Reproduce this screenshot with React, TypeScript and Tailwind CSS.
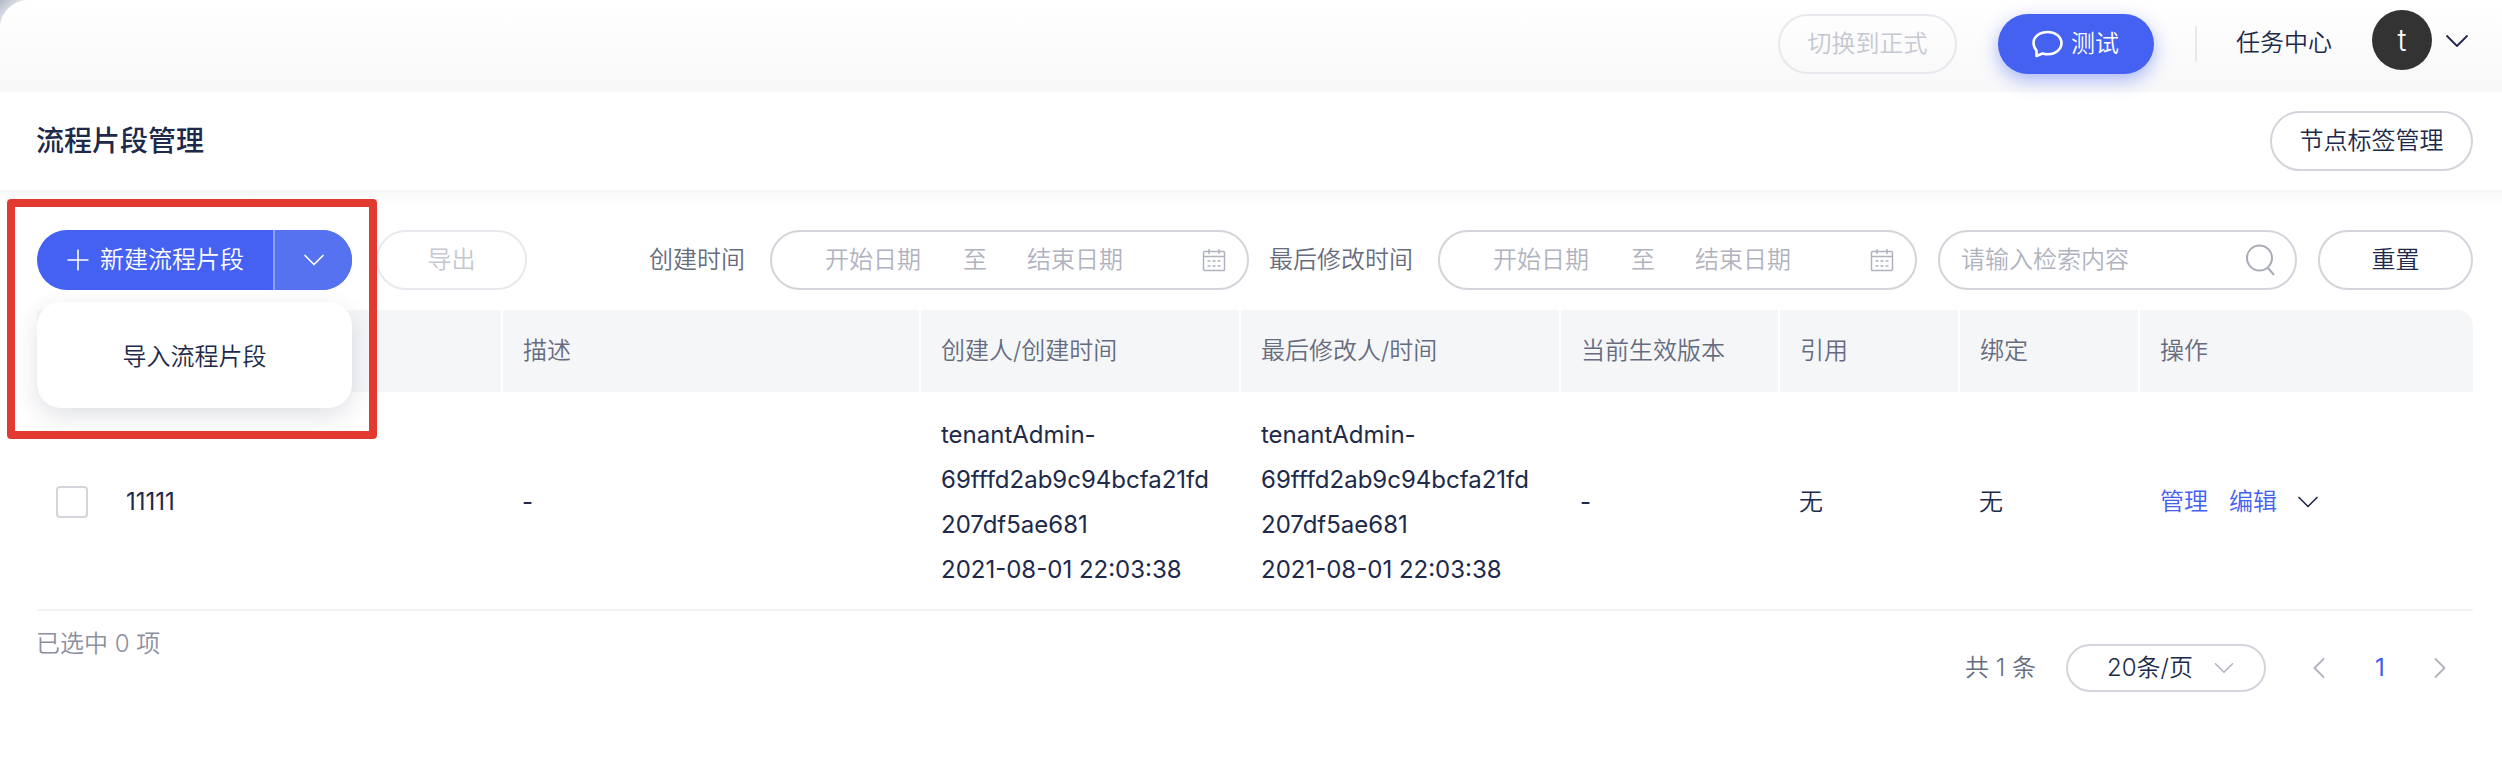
import { ChevronDown, ChevronLeft, ChevronRight, Plus } from "lucide-react"

const pill = "flex h-[60px] shrink-0 items-center rounded-full border-2 whitespace-nowrap"

function CalendarIcon() {
  return (
    <svg width="24" height="24" viewBox="0 0 24 24" fill="none" stroke="#b0b3bf" strokeWidth="1.5">
      <rect x="1.5" y="3.5" width="21" height="19" rx="1" />
      <path d="M1.5 8.5h21M7 1v5M17 1v5" />
      <path d="M5.5 13h13M5.5 18h13" strokeDasharray="3 2" />
    </svg>
  )
}

function DateRange() {
  return (
    <div className={`${pill} w-[479px] border-[#d3d4dc] pl-[53px] pr-[21px] text-[#b0b3bf]`}>
      <span className="w-[96px]">开始日期</span>
      <span className="ml-[42px] w-[24px]">至</span>
      <span className="ml-[40px] w-[96px]">结束日期</span>
      <span className="ml-auto">
        <CalendarIcon />
      </span>
    </div>
  )
}

const columns = ["", "描述", "创建人/创建时间", "最后修改人/时间", "当前生效版本", "引用", "绑定", "操作"]
const gridCols = "grid grid-cols-[464px_418px_320px_320px_219px_180px_180px_335px]"
const owner = ["tenantAdmin-", "69fffd2ab9c94bcfa21fd", "207df5ae681", "2021-08-01 22:03:38"]

export default function App() {
  return (
    <div className="relative h-[758px] w-[2502px] overflow-hidden bg-white text-[24px] leading-[32px] font-[350] text-[#20294a] font-['Inter','Noto_Sans_CJK_SC',sans-serif]">
      {/* top bar */}
      <div className="bg-[linear-gradient(135deg,#b4b8c8,#ffffff_26px)]">
        <header className="flex h-[92px] items-center rounded-tl-[28px] bg-gradient-to-b from-white to-[#f8f8f9] pr-[25px]">
          <div className={`${pill} mb-[4px] ml-auto h-[59px] w-[179px] justify-center border-[#e8e9ee] text-[#c6c8d1]`}>切换到正式</div>
          <div className="mb-[4px] ml-[41px] flex h-[60px] w-[156px] items-center rounded-full bg-[#4461f2] pl-[33px] text-white shadow-[0_6px_18px_rgba(68,97,242,0.45)]">
            <svg width="32" height="28" viewBox="0 0 32 28" fill="none" stroke="currentColor" strokeWidth="2.6" strokeLinejoin="round">
              <path d="M17 2C9 2 2.500 6.500 2.500 13c0 3 1.200 5.500 3 7.500V26l6-2.500c1.700.5 3.500.8 5.500.8 7.500 0 13.500-5 13.500-11.200S24.500 2 17 2z" />
            </svg>
            <span className="ml-[8px]">测试</span>
          </div>
          <div className="mb-[4px] ml-[41px] h-[36px] w-[2px] bg-[#e8e9ee]" />
          <span className="mb-[6px] ml-[39px]">任务中心</span>
          <div className="mb-[12px] ml-[40px] flex h-[60px] w-[60px] items-center justify-center rounded-full bg-[#333333] text-[30px] text-white">t</div>
          <ChevronDown size={40} strokeWidth={1.1} className="mb-[10px] ml-[5px]" />
        </header>
      </div>

      {/* title */}
      <div className="flex h-[98px] items-center justify-between pl-[36px] pr-[29px]">
        <h1 className="text-[28px] font-medium">流程片段管理</h1>
        <div className={`${pill} w-[203px] justify-center border-[#d3d4dc]`}>节点标签管理</div>
      </div>
      <div className="h-[16px] bg-gradient-to-b from-[#f7f7f8] to-white" />

      {/* toolbar */}
      <div className="mt-[24px] flex items-center pl-[37px] pr-[29px]">
        <div className="flex h-[60px] w-[315px] overflow-hidden rounded-full bg-[#4461f2] text-white">
          <div className="flex w-[236px] items-center pl-[24px]">
            <Plus size={34} strokeWidth={1.1} />
            <span className="ml-[5px]">新建流程片段</span>
          </div>
          <div className="flex flex-1 items-center justify-center border-l-2 border-[#8fa1f7] bg-[#5672f0]">
            <ChevronDown size={36} strokeWidth={1.1} />
          </div>
        </div>
        <div className={`${pill} ml-[24px] w-[151px] justify-center border-[#e8e9ee] text-[#c6c8d1]`}>导出</div>
        <span className="ml-auto text-[#666c80]">创建时间</span>
        <div className="ml-[25px]">
          <DateRange />
        </div>
        <span className="ml-[20px] text-[#666c80]">最后修改时间</span>
        <div className="ml-[25px]">
          <DateRange />
        </div>
        <div className={`${pill} ml-[21px] w-[359px] justify-between border-[#d3d4dc] pl-[21px] pr-[18px] text-[#b0b3bf]`}>
          <span>请输入检索内容</span>
          <svg width="32" height="32" viewBox="0 0 32 32" fill="none" stroke="#a9acb8" strokeWidth="2">
            <circle cx="14.500" cy="14" r="12.500" />
            <path d="M23 24l6 7" />
          </svg>
        </div>
        <div className={`${pill} ml-[21px] w-[155px] justify-center border-[#d3d4dc]`}>重置</div>
      </div>

      {/* table */}
      <div className="mx-[37px] mt-[20px] w-[2436px]">
        <div className={`${gridCols} h-[82px] rounded-tr-[16px] bg-[#f5f6f8] text-[#666c80]`}>
          {columns.map((c, i) => (
            <div key={i} className={`flex items-center pl-[20px] ${i > 0 ? "border-l-2 border-white" : ""}`}>
              {c}
            </div>
          ))}
        </div>
        <div className={`${gridCols} h-[219px] items-center border-b-2 border-[#f3f4f6] pt-[2px]`}>
          <div className="flex items-center pl-[19px]">
            <div className="h-[32px] w-[32px] rounded-[4px] border-2 border-[#d3d4dc]" />
            <span className="ml-[38px] font-normal">11111</span>
          </div>
          <div className="pl-[21px] font-normal">-</div>
          {[0, 1].map((k) => (
            <div key={k} className="pl-[22px] leading-[45px] font-normal">
              {owner.map((line) => (
                <div key={line}>{line}</div>
              ))}
            </div>
          ))}
          <div className="pl-[21px] font-normal">-</div>
          <div className="pl-[21px]">无</div>
          <div className="pl-[21px]">无</div>
          <div className="flex items-center pl-[22px] text-[#4461f2]">
            <span>管理</span>
            <span className="ml-[21px]">编辑</span>
            <ChevronDown size={36} strokeWidth={1.1} className="ml-[13px] text-[#20294a]" />
          </div>
        </div>
      </div>

      {/* footer */}
      <div className="mx-[37px] flex h-[100px] w-[2436px] items-start justify-between">
        <span className="-ml-px mt-[17px] text-[#8b8fa0]">已选中 0 项</span>
        <div className="mt-[33px] flex items-center">
          <span className="text-[#666c80]">共 1 条</span>
          <div className="ml-[30px] flex h-[48px] w-[200px] items-center rounded-full border-2 border-[#d3d4dc] pl-[39px]">
            <span>20条/页</span>
            <ChevronDown size={34} strokeWidth={1} className="ml-[14px] text-[#b0b3bf]" />
          </div>
          <ChevronLeft size={36} strokeWidth={1.2} className="ml-[35px] text-[#b0b3bf]" />
          <span className="ml-[38px] w-[11px] font-normal text-[#3d5cf0]">1</span>
          <ChevronRight size={36} strokeWidth={1.2} className="ml-[36px] mr-[15px] text-[#b0b3bf]" />
        </div>
      </div>

      {/* split button menu */}
      <div className="absolute left-[37px] top-[302px] flex h-[106px] w-[315px] items-center justify-center rounded-[24px] bg-white pt-[4px] shadow-[0_8px_24px_rgba(32,41,74,0.14)]">
        导入流程片段
      </div>

      {/* annotation */}
      <div className="pointer-events-none absolute left-[7px] top-[199px] h-[240px] w-[370px] rounded-[4px] border-[8px] border-[#e23a30]" />
    </div>
  )
}
